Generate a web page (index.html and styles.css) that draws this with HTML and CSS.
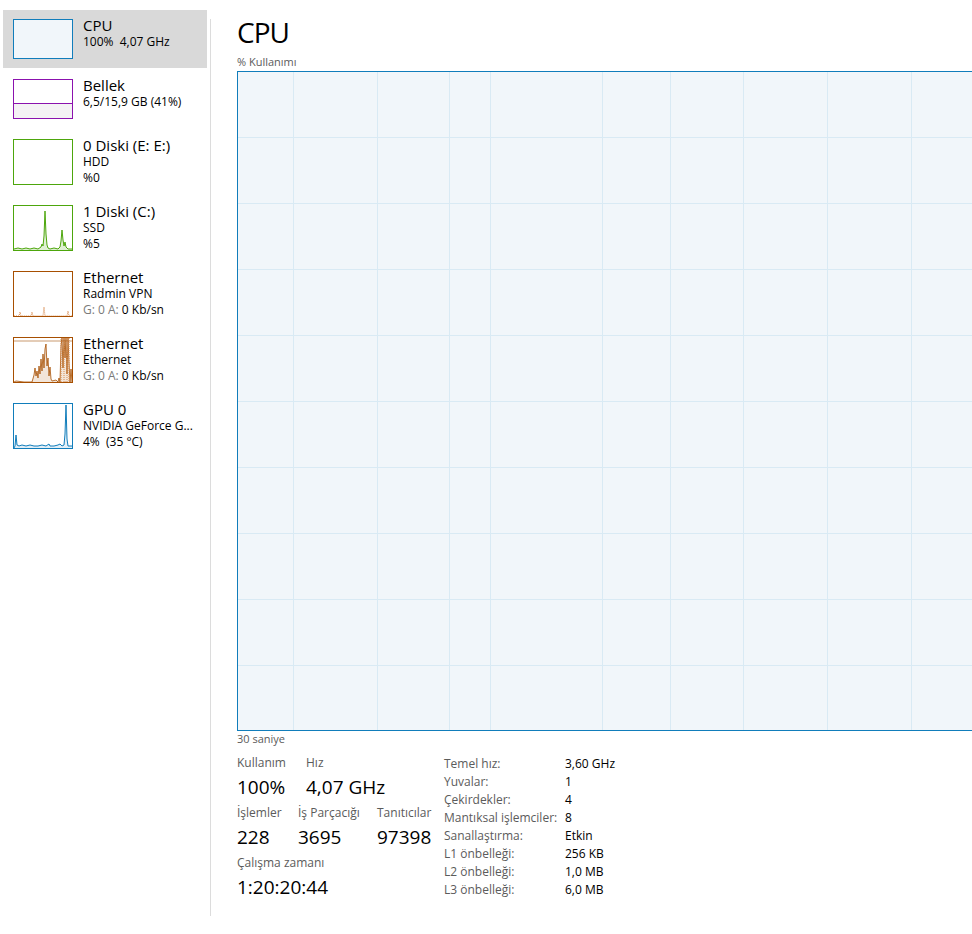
FILE: index.html
```html
<!DOCTYPE html>
<html lang="tr">
<head>
    <meta charset="UTF-8">
    <meta name="viewport" content="width=device-width, initial-scale=1.0">
    <title>Görev Yöneticisi - Performans</title>
    <link rel="stylesheet" href="styles.css">
</head>
<body>
    <div class="app">
        <!-- Left list of devices -->
        <aside class="sidebar">
            <div class="item selected">
                <div class="thumb thumb-cpu"></div>
                <div class="item-text">
                    <div class="item-title">CPU</div>
                    <div class="item-sub">100%&nbsp; 4,07 GHz</div>
                </div>
            </div>

            <div class="item">
                <div class="thumb thumb-mem">
                    <div class="mem-fill"></div>
                </div>
                <div class="item-text">
                    <div class="item-title">Bellek</div>
                    <div class="item-sub">6,5/15,9 GB (41%)</div>
                </div>
            </div>

            <div class="item">
                <div class="thumb thumb-disk tall"></div>
                <div class="item-text">
                    <div class="item-title">0 Diski (E: E:)</div>
                    <div class="item-sub">HDD</div>
                    <div class="item-sub">%0</div>
                </div>
            </div>

            <div class="item">
                <div class="thumb thumb-disk tall">
                    <svg viewBox="0 0 58 44" preserveAspectRatio="none">
                        <polygon class="disk-area" points="0,44 0,43 4,42 8,43 12,42 16,43 20,42 24,43 27,41 28,38 29,40 30,30 31,5 32,28 33,39 34,42 36,43 40,42 44,43 46,41 47,35 48,24 49,34 50,40 51,36 52,41 54,43 58,43 58,44"/>
                        <polyline class="disk-line" points="0,43 4,42 8,43 12,42 16,43 20,42 24,43 27,41 28,38 29,40 30,30 31,5 32,28 33,39 34,42 36,43 40,42 44,43 46,41 47,35 48,24 49,34 50,40 51,36 52,41 54,43 58,43"/>
                    </svg>
                </div>
                <div class="item-text">
                    <div class="item-title">1 Diski (C:)</div>
                    <div class="item-sub">SSD</div>
                    <div class="item-sub">%5</div>
                </div>
            </div>

            <div class="item">
                <div class="thumb thumb-net tall">
                    <svg viewBox="0 0 58 44" preserveAspectRatio="none">
                        <polyline class="net-dash" points="0,44 5,44 6,40 7,44 17,44 18,40 19,44 29,44 30,35 31,44 53,44 54,39 55,44 58,44"/>
                    </svg>
                </div>
                <div class="item-text">
                    <div class="item-title">Ethernet</div>
                    <div class="item-sub">Radmin VPN</div>
                    <div class="item-sub"><span class="dim">G: 0 A:</span> 0 Kb/sn</div>
                </div>
            </div>

            <div class="item">
                <div class="thumb thumb-net tall">
                    <svg viewBox="0 0 58 44" preserveAspectRatio="none">
                        <line class="net-limit" x1="0" y1="3" x2="58" y2="3"/>
                        <polygon class="net-area" points="0,44 2,43 10,44 18,44 20,37 21,30 22,38 23,33 24,40 25,28 26,36 27,21 28,33 29,16 30,30 31,11 32,6 33,28 34,20 35,38 36,29 37,41 38,43 42,42 44,44 45,40 46,44 47,8 48,0 49,30 50,0 51,20 52,0 53,36 54,0 55,25 56,44 57,31 58,44"/>
                        <polyline class="net-line" points="0,44 2,43 10,44 18,44 20,37 21,30 22,38 23,33 24,40 25,28 26,36 27,21 28,33 29,16 30,30 31,11 32,6 33,28 34,20 35,38 36,29 37,41 38,43 42,42 44,44 45,40 46,44 47,8 48,0 49,30 50,0 51,20 52,0 53,36 54,0 55,25 56,44 57,31 58,44"/>
                        <polyline class="net-dash" points="47,44 47,0 50,0 50,44 53,44 53,0 55,0 55,44"/>
                    </svg>
                </div>
                <div class="item-text">
                    <div class="item-title">Ethernet</div>
                    <div class="item-sub">Ethernet</div>
                    <div class="item-sub"><span class="dim">G: 0 A:</span> 0 Kb/sn</div>
                </div>
            </div>

            <div class="item">
                <div class="thumb thumb-gpu tall">
                    <svg viewBox="0 0 58 44" preserveAspectRatio="none">
                        <polygon class="gpu-area" points="0,44 1,42 2,31 3,41 5,42 8,41 12,42 16,41 20,42 24,42 28,41 32,42 35,40 36,42 40,42 44,41 46,40 48,42 50,41 51,30 52,1 53,35 54,42 58,42 58,44"/>
                        <polyline class="gpu-line" points="0,44 1,42 2,31 3,41 5,42 8,41 12,42 16,41 20,42 24,42 28,41 32,42 35,40 36,42 40,42 44,41 46,40 48,42 50,41 51,30 52,1 53,35 54,42 58,42"/>
                    </svg>
                </div>
                <div class="item-text">
                    <div class="item-title">GPU 0</div>
                    <div class="item-sub">NVIDIA GeForce G...</div>
                    <div class="item-sub">4%&nbsp; (35 °C)</div>
                </div>
            </div>
        </aside>

        <div class="divider"></div>

        <!-- CPU detail -->
        <main class="main">
            <h1 class="title">CPU</h1>
            <div class="axis-label">% Kullanımı</div>

            <div class="chart">
                <svg class="grid" width="760" height="658">
                    <g class="grid-lines">
                        <line x1="0" y1="65.5" x2="760" y2="65.5"/>
                        <line x1="0" y1="131.5" x2="760" y2="131.5"/>
                        <line x1="0" y1="197.5" x2="760" y2="197.5"/>
                        <line x1="0" y1="263.5" x2="760" y2="263.5"/>
                        <line x1="0" y1="329.5" x2="760" y2="329.5"/>
                        <line x1="0" y1="395.5" x2="760" y2="395.5"/>
                        <line x1="0" y1="461.5" x2="760" y2="461.5"/>
                        <line x1="0" y1="527.5" x2="760" y2="527.5"/>
                        <line x1="0" y1="593.5" x2="760" y2="593.5"/>
                        <line x1="55.5" y1="0" x2="55.5" y2="658"/>
                        <line x1="139.5" y1="0" x2="139.5" y2="658"/>
                        <line x1="211.5" y1="0" x2="211.5" y2="658"/>
                        <line x1="252.5" y1="0" x2="252.5" y2="658"/>
                        <line x1="364.5" y1="0" x2="364.5" y2="658"/>
                        <line x1="432.5" y1="0" x2="432.5" y2="658"/>
                        <line x1="505.5" y1="0" x2="505.5" y2="658"/>
                        <line x1="589.5" y1="0" x2="589.5" y2="658"/>
                        <line x1="673.5" y1="0" x2="673.5" y2="658"/>
                    </g>
                </svg>
            </div>
            <div class="axis-label">30 saniye</div>

            <div class="stats">
                <div class="stats-left">
                    <div class="stat-row">
                        <div class="stat w69">
                            <div class="stat-label">Kullanım</div>
                            <div class="stat-value">100%</div>
                        </div>
                        <div class="stat">
                            <div class="stat-label">Hız</div>
                            <div class="stat-value">4,07 GHz</div>
                        </div>
                    </div>
                    <div class="stat-row">
                        <div class="stat w61">
                            <div class="stat-label">İşlemler</div>
                            <div class="stat-value">228</div>
                        </div>
                        <div class="stat w79">
                            <div class="stat-label">İş Parçacığı</div>
                            <div class="stat-value">3695</div>
                        </div>
                        <div class="stat">
                            <div class="stat-label">Tanıtıcılar</div>
                            <div class="stat-value">97398</div>
                        </div>
                    </div>
                    <div class="stat-row">
                        <div class="stat">
                            <div class="stat-label">Çalışma zamanı</div>
                            <div class="stat-value">1:20:20:44</div>
                        </div>
                    </div>
                </div>

                <div class="stats-right">
                    <div class="spec"><span class="spec-key">Temel hız:</span><span class="spec-val">3,60 GHz</span></div>
                    <div class="spec"><span class="spec-key">Yuvalar:</span><span class="spec-val">1</span></div>
                    <div class="spec"><span class="spec-key">Çekirdekler:</span><span class="spec-val">4</span></div>
                    <div class="spec"><span class="spec-key">Mantıksal işlemciler:</span><span class="spec-val">8</span></div>
                    <div class="spec"><span class="spec-key">Sanallaştırma:</span><span class="spec-val">Etkin</span></div>
                    <div class="spec"><span class="spec-key">L1 önbelleği:</span><span class="spec-val">256 KB</span></div>
                    <div class="spec"><span class="spec-key">L2 önbelleği:</span><span class="spec-val">1,0 MB</span></div>
                    <div class="spec"><span class="spec-key">L3 önbelleği:</span><span class="spec-val">6,0 MB</span></div>
                </div>
            </div>
        </main>
    </div>
</body>
</html>
```

FILE: styles.css
```css
body {
    font-family: "Open Sans", "Noto Sans", sans-serif;
    background-color: #ffffff;
    color: #000000;
    margin: 0;
    overflow: hidden;
}

.app {
    display: flex;
    width: 972px;
    height: 934px;
    overflow: hidden;
}

/* sidebar */

.sidebar {
    width: 204px;
    padding: 10px 0 0 3px;
    flex-shrink: 0;
}

.item {
    display: flex;
    align-items: flex-start;
    gap: 10px;
    padding: 9px 10px;
    margin-bottom: 2px;
}

.item.selected {
    background-color: #d9d9d9;
}

.thumb {
    width: 58px;
    height: 38px;
    border: 1px solid #117dbb;
    flex-shrink: 0;
    position: relative;
    background-color: #ffffff;
}

.thumb.tall {
    height: 44px;
}

.thumb svg {
    display: block;
    width: 58px;
    height: 44px;
}

.thumb-cpu {
    background-color: #f1f6fa;
}

.thumb-mem {
    border-color: #8b12ae;
    display: flex;
    flex-direction: column;
    justify-content: flex-end;
}

.mem-fill {
    height: 14px;
    border-top: 1px solid #8b12ae;
    background-color: #f4f2f4;
}

.thumb-disk {
    border-color: #4da60c;
}

.thumb-net {
    border-color: #a74f01;
}

.thumb-gpu {
    border-color: #117dbb;
}

.disk-area {
    fill: rgba(77, 166, 12, 0.18);
}

.disk-line {
    fill: none;
    stroke: #4da60c;
    stroke-width: 1;
}

.net-area {
    fill: rgba(167, 79, 1, 0.15);
}

.net-line {
    fill: none;
    stroke: #a74f01;
    stroke-width: 0.8;
}

.net-dash {
    fill: none;
    stroke: #d98b4f;
    stroke-width: 1;
    stroke-dasharray: 1 1;
}

.net-limit {
    stroke: #c9996f;
    stroke-width: 1;
}

.gpu-area {
    fill: rgba(17, 125, 187, 0.12);
}

.gpu-line {
    fill: none;
    stroke: #117dbb;
    stroke-width: 1;
}

.item-text {
    margin-top: -3px;
    margin-bottom: -3px;
    white-space: nowrap;
}

.item-title {
    font-size: 15px;
    line-height: 18px;
}

.item-sub {
    font-size: 12px;
    line-height: 16px;
}

.dim {
    color: #7a7a7a;
}

.divider {
    width: 1px;
    height: 897px;
    margin-top: 19px;
    margin-left: 3px;
    background-color: #dcdcdc;
    flex-shrink: 0;
}

/* main panel */

.main {
    padding-left: 26px;
    flex: 1;
    min-width: 0;
}

.title {
    margin: 0;
    padding-top: 15px;
    font-size: 28px;
    line-height: 34px;
    letter-spacing: -1px;
    font-weight: normal;
}

.axis-label {
    font-size: 11px;
    line-height: 16px;
    color: #5b5b5b;
}

.title + .axis-label {
    margin-top: 5px;
    margin-bottom: 1px;
}

.chart {
    width: 760px;
    height: 658px;
    border-top: 1px solid #117dbb;
    border-bottom: 1px solid #117dbb;
    border-left: 1px solid #117dbb;
    background-color: #f1f6fa;
}

.grid {
    display: block;
}

.grid-lines line {
    stroke: #d9eaf4;
    stroke-width: 1;
}

.stats {
    display: flex;
    margin-top: 8px;
}

.stats-left {
    width: 207px;
    display: flex;
    flex-direction: column;
    gap: 6px;
}

.stat-row {
    display: flex;
}

.w69 { width: 69px; }
.w61 { width: 61px; }
.w79 { width: 79px; }

.stat-label {
    font-size: 12px;
    line-height: 16px;
    color: #5b5b5b;
}

.stat-value {
    font-size: 19px;
    line-height: 24px;
    margin-top: 4px;
}

.stats-right {
    display: flex;
    flex-direction: column;
}

.spec {
    display: flex;
    font-size: 12px;
    line-height: 18px;
}

.spec-key {
    width: 121px;
    color: #5b5b5b;
}

.spec-val {
    color: #000000;
}
```
